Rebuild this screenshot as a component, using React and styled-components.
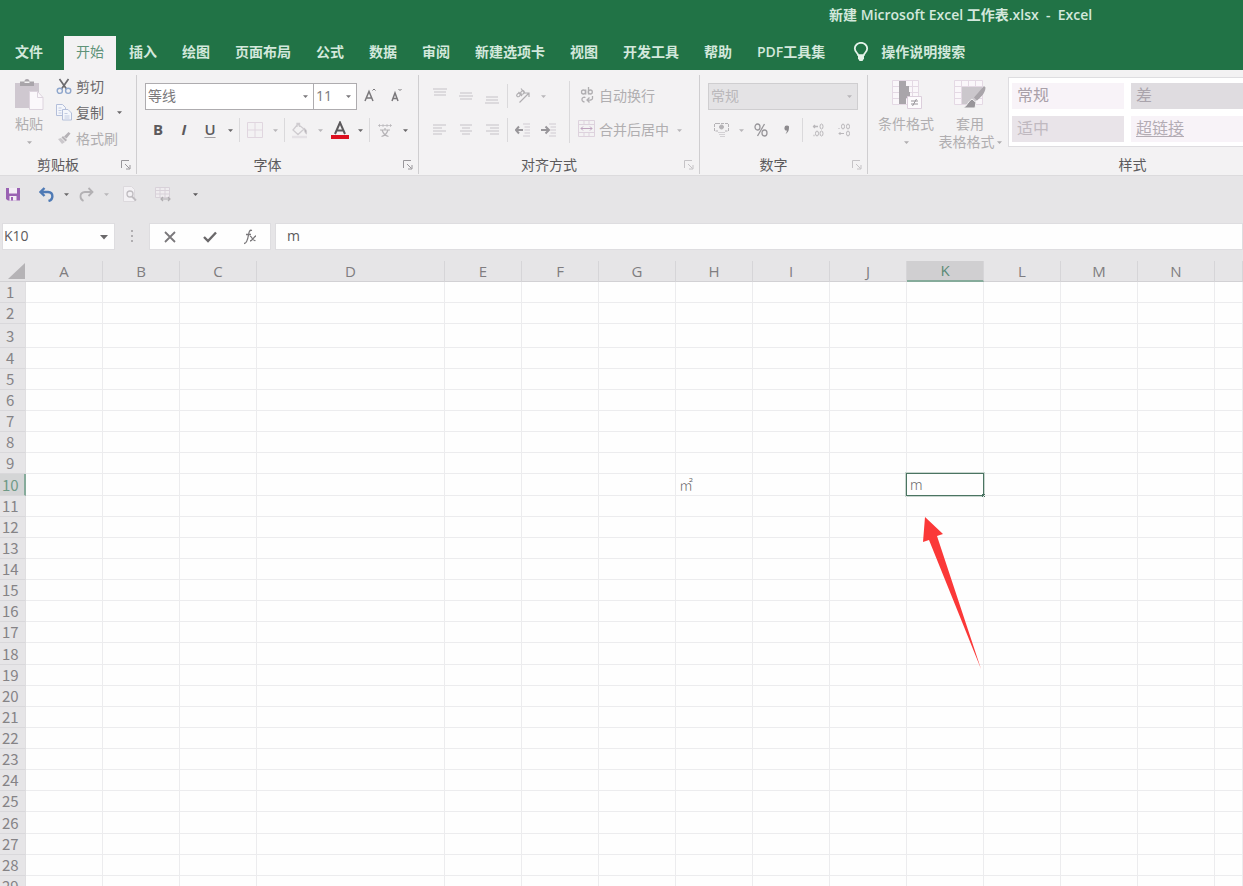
import React from "react";
import styled, { createGlobalStyle, css } from "styled-components";

const GlobalStyle = createGlobalStyle`
  * {
    box-sizing: border-box;
  }

  body {
    margin: 0;
    background: #e6e5e7;
    font-family: "Open Sans", "Noto Sans CJK SC", sans-serif;
    font-size: 14px;
    color: #5c5a5c;
  }

  button, input, select {
    font: inherit;
    color: inherit;
    border: 0;
    border-radius: 0;
    padding: 0;
    margin: 0;
    background: transparent;
  }
`
const Window = styled.div`
  display: flex;
  flex-direction: column;
  height: 100vh;
  overflow: hidden;
`
const TitleBar = styled.header`
  display: grid;
  grid-template-columns: 11fr auto 2fr;
  height: 36px;
  background: #217346;
`
const Title = styled.h1`
  grid-column: 2;
  margin: 0;
  font-size: 14px;
  font-weight: 600;
  line-height: 30px;
  white-space: pre;
  color: #d3e8dc;
`
const Tabs = styled.nav`
  display: flex;
  gap: 1px;
  flex: none;
  height: 34px;
  padding-left: 3px;
  background: #217346;
`
const Tab = styled.button`
  flex: none;
  padding: 0 12px 2px;
  margin-right: ${({file}) => file ? "8px" : "0"};
  font-weight: ${({active}) => active ? 400 : 600};
  line-height: 32px;
  white-space: nowrap;
  color: ${({active}) => active ? "#5f9379" : "#d3e8dc"};
  background: ${({active}) => active ? "#f3f2f3" : "transparent"};
`
const TellMe = styled(Tab)`
  display: flex;
  align-items: center;
  gap: 12px;
  padding: 0 15px 2px;
`
const Ribbon = styled.div`
  display: flex;
  flex: none;
  height: 106px;
  padding: 5px 0 1px;
  overflow: hidden;
  background: #f3f2f3;
  border-bottom: 1px solid #dcdbdd;
`
const Group = styled.section`
  display: flex;
  flex-direction: column;
  flex: none;
  width: ${({width}) => width};
  border-right: 1px solid #cfced0;
`
const GroupBody = styled.div`
  display: flex;
  flex: 1;
  min-height: 0;
  padding: ${({tight}) => tight ? "0" : "4px"} 8px 0;
`
const GroupFooter = styled.div`
  display: flex;
  align-items: center;
  flex: none;
  height: 18px;
`
const GroupName = styled.span`
  flex: 1;
  text-align: center;
  line-height: 18px;
`
const Launcher = styled.button`
  display: flex;
  justify-content: center;
  width: 20px;
  opacity: ${({dim}) => dim ? 0.5 : 1};
`
const Stack = styled.div`
  display: flex;
  flex-direction: column;
`
const ClipboardStack = styled(Stack)`
  width: 70px;
  margin: -2px 0 0 6px;
`
const Line = styled.div`
  display: flex;
  align-items: center;
  height: 34px;
`
const ShortLine = styled(Line)`
  justify-content: space-between;
  height: 26px;
`
const Tool = styled.button`
  display: flex;
  align-items: center;
  justify-content: center;
  flex: none;
  width: 26px;
  height: 26px;
  color: ${({dim}) => dim ? "#b9b7ba" : "#5c5a5c"};
`
const Letter = styled(Tool)`
  padding-bottom: 2px;
  font-size: 15px;
  font-weight: ${({bold}) => bold ? 700 : 600};
  font-style: ${({italic}) => italic ? "italic" : "normal"};
  text-decoration: ${({underline}) => underline ? "underline" : "none"};
  text-decoration-color: #a3a1a4;
  text-underline-offset: 2px;
`
const CaretButton = styled.button`
  display: flex;
  align-items: center;
  justify-content: center;
  flex: none;
  width: ${({wide}) => wide ? "20px" : "14px"};
  height: 26px;
  color: ${({dim}) => dim ? "#b9b7ba" : "#6a686a"};
`
const Divider = styled.span`
  flex: none;
  width: 1px;
  height: ${({tall}) => tall ? "62px" : "24px"};
  margin: ${({tall}) => tall ? "2px 7px" : "0 2px"};
  background: #dad9db;
`
const Labelled = styled.button`
  display: flex;
  align-items: center;
  gap: 4px;
  height: 26px;
  white-space: nowrap;
  color: ${({dim}) => dim ? "#b0aeb0" : "#6a686a"};
`
const WideLabelled = styled(Labelled)`
  gap: 3px;
  padding-bottom: 2px;
`
const BigTool = styled.button`
  display: flex;
  flex-direction: column;
  align-items: center;
  flex: none;
  width: ${({width}) => width};
  height: 78px;
  padding-top: 4px;
  line-height: 18px;
  white-space: nowrap;
  color: #b0aeb0;

  > svg {
    flex: none;
    margin-bottom: 4px;
  }
`
const BigToolLine = styled.span`
  display: flex;
  align-items: center;
  gap: 2px;
  height: 18px;
`
const PickerBox = styled.div`
  display: grid;
  align-items: center;
  width: ${({width}) => width};
  height: 27px;
  margin-left: ${({joined}) => joined ? "-1px" : "0"};
  background: ${({dim}) => dim ? "#e4e3e5" : "#fff"};
  border: 1px solid ${({dim}) => dim ? "#cfced0" : "#aeacaf"};
  color: ${({dim}) => dim ? "#b9b7ba" : "#7b797c"};

  > * {
    grid-area: 1 / 1;
  }

  > svg {
    justify-self: end;
    margin-right: 5px;
    pointer-events: none;
  }
`
const PickerSelect = styled.select`
  appearance: none;
  width: 100%;
  height: 25px;
  padding: 0 0 2px 2px;
  opacity: 1;
`
const Gallery = styled.div`
  display: grid;
  grid-template-columns: 112px 1fr;
  grid-template-rows: 26px 26px;
  gap: 7px;
  flex: 1;
  align-self: flex-start;
  height: 70px;
  margin: 2px 0 0 4px;
  padding: 5px 3px;
  background: #fff;
  border: 1px solid #dedde0;
`
const StyleCell = styled.button`
  padding: 0 0 2px 5px;
  font-size: 16px;
  line-height: 24px;
  text-align: left;
  text-decoration: ${({underline}) => underline ? "underline" : "none"};
  text-underline-offset: 2px;
  color: ${({color}) => color};
  background: ${({fill}) => fill};
`
const QuickAccess = styled.div`
  display: flex;
  align-items: center;
  flex: none;
  height: 36px;
  margin-bottom: 11px;
`
const QuickTool = styled(Tool)`
  width: ${({wide}) => wide ? "33px" : "26px"};
`
const SaveTool = styled(QuickTool)`
  margin-right: 7px;
`
const FormulaBar = styled.div`
  display: flex;
  flex: none;
  height: 27px;
  margin-bottom: 11px;
  padding-left: 2px;
`
const barBox = css`
  display: flex;
  align-items: center;
  background: #fefefe;
  border: 1px solid #dedde0;
`
const NameBox = styled.div`
  ${barBox}
  width: 113px;
`
const NameInput = styled.input`
  flex: 1;
  min-width: 0;
  padding: 0 0 2px 1px;
`
const Grip = styled.div`
  display: flex;
  align-items: center;
  justify-content: center;
  width: 34px;
`
const EntryButtons = styled.div`
  ${barBox}
  width: 122px;
`
const EntryButton = styled.button`
  display: flex;
  align-items: center;
  justify-content: center;
  flex: 1;
  height: 25px;
`
const FormulaInput = styled.input`
  ${barBox}
  flex: 1;
  min-width: 0;
  margin-left: 4px;
  padding: 0 0 2px 11px;
`
const SheetArea = styled.main`
  flex: 1;
  min-height: 0;
  overflow: hidden;
`
const Sheet = styled.table`
  width: 100%;
  table-layout: fixed;
  border-collapse: separate;
  border-spacing: 0;
  background: #fefefe;
`
const Corner = styled.th`
  height: 21px;
  padding: 0 1px 2px 0;
  vertical-align: bottom;
  background: #e6e5e7;
  border-bottom: 1px solid #d2d1d4;

  svg {
    display: block;
    margin-left: auto;
  }
`
const ColumnHead = styled.th`
  height: 21px;
  padding: 0;
  font-size: 15px;
  font-weight: 400;
  line-height: ${({active}) => active ? "19px" : "20px"};
  color: ${({active}) => active ? "#5b8a76" : "#7f7d80"};
  background: ${({active}) => active ? "#d0cfd1" : "#e6e5e7"};
  border-right: 1px solid #d6d5d8;
  border-bottom: ${({active}) => active ? "2px solid #86ab9b" : "1px solid #d2d1d4"};
`
const RowHead = styled.th`
  padding: 0 0 0 ${({wide}) => wide ? "2px" : "6px"};
  font-family: "Noto Sans CJK SC", sans-serif;
  font-size: 15px;
  font-weight: 400;
  line-height: 20px;
  text-align: left;
  color: ${({active}) => active ? "#6f9a87" : "#858386"};
  background: ${({active}) => active ? "#d4d5d6" : "#e6e5e7"};
  border-right: ${({active}) => active ? "2px solid #86ab9b" : "1px solid #e0dfe1"};
  border-bottom: 1px solid #d9d8db;
`
const Row = styled.tr`
  height: ${({height}) => height}px;
`
const Cell = styled.td`
  position: relative;
  padding: 0 0 0 3px;
  font-family: "Noto Sans", "Noto Sans CJK SC", sans-serif;
  font-weight: 300;
  line-height: 20px;
  color: #6a686a;
  border-right: 1px solid #ececee;
  border-bottom: 1px solid #ececee;

  ${({active}) => active && css`
    &:before {
      content: '';
      position: absolute;
      inset: -1px;
      border: 1px solid #4b7462;
      outline: 1px solid #c9d6d0;
    }

    &:after {
      content: '';
      position: absolute;
      right: -2px;
      bottom: -2px;
      width: 3px;
      height: 3px;
      background: #4b7462;
    }
  `}
`
const Pointer = styled.svg`
  position: absolute;
  z-index: 2;
  top: 43px;
  left: 14px;
`

const Caret = ({size = 5}) => (
  <svg width={size} height={size} viewBox="0 0 6 6" aria-hidden="true">
    <path d="M0 1.5h6L3 4.8z" fill="currentColor" />
  </svg>
)

const LauncherIcon = () => (
  <svg width="10" height="10" viewBox="0 0 10 10" fill="none" stroke="#98969a">
    <path d="M.5 8V.5H8M4 4l4.5 4.5M9 5v4H5" />
  </svg>
)

const BulbIcon = () => (
  <svg width="16" height="20" viewBox="0 0 16 20" fill="none" stroke="#e4f3ea" strokeWidth="1.8">
    <path d="M5.2 13.2C5 11 1.8 10 1.8 6.6a6.2 5.8 0 0 1 12.4 0c0 3.4-3.2 4.4-3.4 6.6z" />
    <path d="M5 14h6v2.5L9.5 19h-3L5 16.5z" fill="#e4f3ea" stroke="none" />
  </svg>
)

const PasteIcon = () => (
  <svg width="30" height="32" viewBox="0 0 30 32">
    <path d="M1 4h24v25H1z" fill="#cfc8d0" />
    <path d="M6 2.5h4.5a2.5 2.5 0 0 1 5 0H20V7H6z" fill="#a9a5aa" />
    <path d="M10.5 2.5h5v1.5h-5z" fill="#f3f2f3" />
    <path d="M15.5 12.5h8l5.5 6v12H15.5z" fill="#fbf8fb" stroke="#ddd4de" />
    <path d="M23.5 12.5v6H29" fill="none" stroke="#ddd4de" />
  </svg>
)

const CutIcon = () => (
  <svg width="16" height="17" viewBox="0 0 16 17" fill="none">
    <path d="M3.5 1l7 10M12.5 1l-7 10" stroke="#6b6a6e" strokeWidth="1.7" />
    <circle cx="3.8" cy="12.8" r="2.6" stroke="#8ea6cc" strokeWidth="1.4" />
    <circle cx="12.2" cy="12.8" r="2.6" stroke="#8ea6cc" strokeWidth="1.4" />
  </svg>
)

const CopyIcon = () => (
  <svg width="16" height="17" viewBox="0 0 16 17" fill="#f4f6fb" stroke="#b4bfda">
    <path d="M.5.5h6l3 3v8h-9z" />
    <path d="M6.5 5.5h5.5l3.5 3.5v7h-9z" />
    <path d="M2.5 4h3M2.5 6.5h3M2.5 9h3M8.5 9.5h3M8.5 12h5M8.5 14h5" stroke="#c3cce2" />
  </svg>
)

const BrushIcon = () => (
  <svg width="16" height="16" viewBox="0 0 16 16" fill="#b5b2b6">
    <path d="M12.5 2l2 1.5-4 5-2.5-2zM7 6l4 4-1.5 1.5-4-4z" />
    <path d="M5 8l4 4-3 2-4-5z" fill="#cbc8cc" />
  </svg>
)

const GrowIcon = ({shrink}) => (
  <svg width="16" height="18" viewBox="0 0 16 18" fill="none" stroke="#7a787b">
    <path d={shrink ? "M4 14l3-8 3 8M5 11.5h4" : "M3 14L7 4.5 11 14M4.5 11h5"} strokeWidth="1.5" />
    <path d={shrink ? "M10.5 2l1.5 1.5L13.5 2" : "M10.5 3.5L12 2l1.5 1.5"} />
  </svg>
)

const BordersIcon = () => (
  <svg width="16" height="16" viewBox="0 0 16 16" fill="none" stroke="#e0d6df">
    <path d="M.5.5h15v15H.5zM8 .5v15M.5 8h15" />
  </svg>
)

const FillIcon = () => (
  <svg width="18" height="17" viewBox="0 0 18 17" fill="none" stroke="#cfccd0">
    <path d="M7 2L2 8l5 4.5L13 7 8 3zM6 5V1.5h2.5V5" strokeWidth="1.3" />
    <path d="M13 6c2 1 3 3 2.5 6-1-.5-2-2-2.5-6z" fill="#b5b2b6" />
    <path d="M1 15h15" stroke="#e4e1e5" strokeWidth="2.5" />
  </svg>
)

const FontColorIcon = () => (
  <svg width="18" height="19" viewBox="0 0 18 19" fill="none">
    <path d="M4 13L9 1.5 14 13M5.5 9.5h7" stroke="#5c5a5c" strokeWidth="2" />
    <path d="M0 14h18v4H0z" fill="#dd1020" />
  </svg>
)

const PhoneticIcon = () => (
  <svg width="16" height="16" viewBox="0 0 16 16" fill="none" stroke="#b5b3b6">
    <path d="M1 3.5h14M2.5 2v3M6 2v3M10 2v3M13.5 2v3" opacity="0.7" />
    <path d="M3 8h10M8 6v2M5 8c1 3 3 5.5 6.5 6.5M11 8c-1 3-3 5.5-6.5 6.5" strokeWidth="1.2" />
  </svg>
)

// horizontal rules of a paragraph icon, given as [x, width] from the top
const LinesIcon = ({rows, top = 2}) => (
  <svg width="14" height="16" viewBox="0 0 14 16" fill="#dcdadd">
    {rows.map(([x, width], i) => (
      <rect key={i} x={x} y={top + i * 3} width={width} height="2" />
    ))}
  </svg>
)

const OrientIcon = () => (
  <svg width="16" height="16" viewBox="0 0 16 16" fill="none" stroke="#b0aeb1" strokeWidth="1.2">
    <path d="M4.5 14.5l9-9M10 5h4v4" />
    <ellipse cx="3.5" cy="7" rx="2" ry="1.5" transform="rotate(-45 3.5 7)" />
    <ellipse cx="7.5" cy="4.5" rx="2" ry="1.5" transform="rotate(-45 7.5 4.5)" />
    <path d="M3.5 4l3.5 4M6 .5l4 5" />
  </svg>
)

const IndentIcon = ({right}) => (
  <svg width="16" height="14" viewBox="0 0 16 14" fill="none">
    <path d="M8 1h7M9.5 4h5.5M9.5 7h5.5M9.5 10h5.5M8 13h7" stroke="#dcd8dd" strokeWidth="1.4" />
    <path d={right ? "M0 7h7M4.5 3.5L8 7l-3.5 3.5" : "M8 7H1M4 3.5L.8 7 4 10.5"} stroke="#98969a" strokeWidth="2" />
  </svg>
)

const WrapIcon = () => (
  <svg width="19" height="17" viewBox="0 0 19 17" fill="none" stroke="#b0aeb1" strokeWidth="1.3">
    <circle cx="6.5" cy="5" r="2" />
    <path d="M8.7 2.5V7.5M11.5 0v7.5" />
    <circle cx="13.3" cy="5" r="2" />
    <path d="M8.5 10.5c-4-1.5-5 4-1 4.5M15.5 9v2.5c0 1.5-3 2-5 1.5M12.5 10.5L10 13l2.5 2.5" />
  </svg>
)

const MergeIcon = () => (
  <svg width="19" height="18" viewBox="0 0 19 18" fill="none" stroke="#ddd2dd">
    <path d="M1.5.5h16v16h-16zM1.5 4.5h16M1.5 12.5h16M7 .5v4M12 .5v4M7 12.5v4M12 12.5v4" />
    <path d="M4 8.5h11M6 6.5l-2 2 2 2M13 6.5l2 2-2 2" stroke="#bfa4bf" />
  </svg>
)

const CurrencyIcon = () => (
  <svg width="17" height="16" viewBox="0 0 17 16" fill="none" stroke="#b5b3b6">
    <path d="M5 1.5H1.5V9H5M12 1.5h3.5V9H12M4 1.5h9" strokeDasharray="3 1" />
    <circle cx="8.5" cy="5" r="2" fill="#b5b3b6" />
    <path d="M5 10.5h7M6 12.5h6M7 14.5h5" stroke="#d3d1d4" />
  </svg>
)

const PercentIcon = () => (
  <svg width="14" height="14" viewBox="0 0 14 14" fill="none" stroke="#98969a" strokeWidth="1.3">
    <ellipse cx="3.5" cy="4" rx="2.5" ry="3" />
    <ellipse cx="10.5" cy="10" rx="2.5" ry="3" />
    <path d="M10.5 1l-7 12" />
  </svg>
)

const CommaIcon = () => (
  <svg width="8" height="12" viewBox="0 0 8 12">
    <path d="M4 1.5a2 2 0 0 1 2 2.3C6 7 4.5 9 2.5 10c1-1.5 1.5-2.5 1.3-3.5A2.5 2.5 0 0 1 4 1.5z" fill="#8d8b8e" />
  </svg>
)

const DecimalIcon = ({less}) => (
  <svg width="14" height="14" viewBox="0 0 14 14" fill="none" stroke="#b9b7ba">
    {less ? (
      <>
        <path d="M1.5 5.5h1M2 10.5h5M3.5 9L2 10.5 3.5 12" />
        <ellipse cx="6" cy="3.5" rx="1.5" ry="2.5" />
        <ellipse cx="11" cy="3.5" rx="1.5" ry="2.5" />
        <ellipse cx="11" cy="10.5" rx="1.5" ry="2.5" />
      </>
    ) : (
      <>
        <path d="M2 3.5h5M4 2L2.5 3.5 4 5M2.5 12.5h1" strokeWidth="1.3" />
        <ellipse cx="10.5" cy="3.5" rx="1.5" ry="2.5" />
        <ellipse cx="6" cy="10.5" rx="1.5" ry="2.5" />
        <ellipse cx="10.5" cy="10.5" rx="1.5" ry="2.5" />
      </>
    )}
  </svg>
)

const ConditionalIcon = () => (
  <svg width="32" height="32" viewBox="0 0 32 32" fill="none">
    <path d="M2.5 1.5h26v24h-26zM2.5 7.5h26M2.5 13.5h26M2.5 19.5h26M22.5 1.5v24" fill="#faf7fa" stroke="#e4d9e4" />
    <path d="M9 2h7v5h3v6h1v6h-4v6H9z" fill="#a9a5aa" />
    <path d="M17.5 17.5h14v12h-14z" fill="#fdfbfd" stroke="#dccfdc" />
    <path d="M21 22h7M21 25h7M26.5 20l-4 7" stroke="#98959a" />
  </svg>
)

const FormatTableIcon = () => (
  <svg width="34" height="32" viewBox="0 0 34 32" fill="none">
    <path d="M1.5 1.5h28v24h-28zM1.5 7.5h28M1.5 13.5h28M1.5 19.5h28M8.5 1.5v24M15.5 1.5v6M22.5 1.5v6" fill="#faf7fa" stroke="#e4d9e4" />
    <path d="M9 8h20v8l-9 9H9z" fill="#cbc7cc" />
    <path d="M31 7l1.5 1.5c0 5-4 9-8.5 13l-3-3z" fill="#a9a5aa" />
    <path d="M19 20l4 3.5L22 29H10c4-1.5 5-7 9-9z" fill="#98959a" stroke="#f3f2f3" />
  </svg>
)

const SaveIcon = () => (
  <svg width="14" height="14" viewBox="0 0 14 14">
    <path d="M0 1h14v12.5H2L0 12z" fill="#9a62b3" />
    <path d="M3 1h8v5.5H3zM3.5 9h7v4.5h-7z" fill="#f3edf5" />
    <path d="M5 10h2v3.5H5z" fill="#9a62b3" />
  </svg>
)

const UndoIcon = ({redo}) => (
  <svg width="15" height="15" viewBox="0 0 15 15" fill="none" stroke={redo ? "#b3b1b4" : "#4f7ab5"}>
    <path
      d={redo ? "M13.5 5H6C0 5.5.5 12 4.5 14M9.5 1l4 4-4 4" : "M1.5 5H9c6 .5 5.5 7.5.5 9M5.5 1l-4 4 4 4"}
      strokeWidth={redo ? 1.8 : 2.4}
    />
  </svg>
)

const PreviewIcon = () => (
  <svg width="15" height="16" viewBox="0 0 15 16" fill="none">
    <path d="M1.5.5h8l3 3v12h-11z" fill="#f3f1f4" stroke="#dcd9dd" />
    <circle cx="8" cy="8" r="3" stroke="#bfbcc0" strokeWidth="1.3" />
    <path d="M10 10.5l4 4" stroke="#bfbcc0" strokeWidth="1.8" />
  </svg>
)

const TableEditIcon = () => (
  <svg width="17" height="16" viewBox="0 0 17 16" fill="none">
    <path d="M1.5 1.5h14v10h-14zM1.5 4.5h14M1.5 8h14M6 1.5v10M11 1.5v10" fill="#efecef" stroke="#d8d1d9" />
    <path d="M7 13h9M9 11l-2 2 2 2M14 11l2 2-2 2" stroke="#b0adb1" strokeWidth="1.2" />
  </svg>
)

const Picker = ({label, value, width, joined, dim}) => (
  <PickerBox width={width} joined={joined} dim={dim}>
    <PickerSelect aria-label={label} defaultValue={value} disabled={dim}>
      <option>{value}</option>
    </PickerSelect>
    <Caret />
  </PickerBox>
)

const RibbonGroup = ({name, width, tight, dim, children}) => (
  <Group width={width} aria-label={name}>
    <GroupBody tight={tight}>{children}</GroupBody>
    <GroupFooter>
      <GroupName>{name}</GroupName>
      <Launcher dim={dim} aria-label={name + "设置"}><LauncherIcon /></Launcher>
    </GroupFooter>
  </Group>
)

const More = ({dim, wide}) => (
  <CaretButton dim={dim} wide={wide} aria-label="更多"><Caret /></CaretButton>
)

const tabs = ["文件", "开始", "插入", "绘图", "页面布局", "公式", "数据", "审阅", "新建选项卡", "视图", "开发工具", "帮助", "PDF工具集"];

const columns = [
  ["A", 77], ["B", 77], ["C", 77], ["D", 188], ["E", 77], ["F", 77], ["G", 77], ["H", 77],
  ["I", 77], ["J", 77], ["K", 77], ["L", 77], ["M", 77], ["N", 77], ["", "auto"],
];

const rowHeights = {3: 24, 10: 22, 18: 22, 26: 22};
const rows = Array.from({length: 29}, (_, i) => i + 1);
const cells = {H10: "㎡", K10: "m"};

const Spreadsheet = () => (
  <SheetArea>
    <Sheet>
      <colgroup>
        <col width="26" />
        {columns.map(([name, width]) => <col key={name} width={width} />)}
      </colgroup>
      <thead>
        <tr>
          <Corner aria-label="全选">
            <svg width="17" height="16" viewBox="0 0 17 16"><path d="M17 0v16H0z" fill="#b5b3b6" /></svg>
          </Corner>
          {columns.map(([name]) => (
            <ColumnHead key={name} active={name === "K"}>{name}</ColumnHead>
          ))}
        </tr>
      </thead>
      <tbody>
        {rows.map(row => (
          <Row key={row} height={rowHeights[row] || 21}>
            <RowHead active={row === 10} wide={row > 9}>{row}</RowHead>
            {columns.map(([name]) => {
              const active = name + row === "K10";
              return (
                <Cell key={name} active={active}>
                  {cells[name + row]}
                  {active && (
                    <Pointer width="62" height="154" viewBox="0 0 62 154" aria-hidden="true">
                      <path d="M4 0l18 17-6 2 44 133L8 23l-6 2z" fill="#fb3838" />
                    </Pointer>
                  )}
                </Cell>
              )
            })}
          </Row>
        ))}
      </tbody>
    </Sheet>
  </SheetArea>
)

const App = () => {
  return (
    <Window>
      <GlobalStyle />

      <TitleBar>
        <Title>{"新建 Microsoft Excel 工作表.xlsx  -  Excel"}</Title>
      </TitleBar>

      <Tabs>
        {tabs.map((tab, i) => (
          <Tab key={tab} file={i === 0} active={i === 1}>{tab}</Tab>
        ))}
        <TellMe><BulbIcon />操作说明搜索</TellMe>
      </Tabs>

      <Ribbon>
        <RibbonGroup name="剪贴板" width="137px" tight>
          <BigTool width="42px">
            <PasteIcon />
            粘贴
            <BigToolLine><Caret /></BigToolLine>
          </BigTool>
          <ClipboardStack>
            <ShortLine><Labelled><CutIcon />剪切</Labelled></ShortLine>
            <ShortLine>
              <Labelled><CopyIcon />复制</Labelled>
              <More />
            </ShortLine>
            <ShortLine><Labelled dim><BrushIcon />格式刷</Labelled></ShortLine>
          </ClipboardStack>
        </RibbonGroup>

        <RibbonGroup name="字体" width="282px">
          <Stack>
            <Line>
              <Picker label="字体" value="等线" width="169px" />
              <Picker label="字号" value="11" width="44px" joined />
              <Tool aria-label="增大字号"><GrowIcon /></Tool>
              <Tool aria-label="减小字号"><GrowIcon shrink /></Tool>
            </Line>
            <Line>
              <Letter bold>B</Letter>
              <Letter bold italic>I</Letter>
              <Letter underline>U</Letter>
              <More />
              <Divider />
              <Tool aria-label="边框"><BordersIcon /></Tool>
              <More dim />
              <Divider />
              <Tool aria-label="填充颜色"><FillIcon /></Tool>
              <More dim />
              <Tool aria-label="字体颜色"><FontColorIcon /></Tool>
              <More />
              <Divider />
              <Tool aria-label="拼音"><PhoneticIcon /></Tool>
              <More />
            </Line>
          </Stack>
        </RibbonGroup>

        <RibbonGroup name="对齐方式" width="281px" dim>
          <Stack>
            <Line>
              <Tool aria-label="顶端对齐"><LinesIcon rows={[[0, 14], [1, 12], [1, 12]]} top={0} /></Tool>
              <Tool aria-label="垂直居中"><LinesIcon rows={[[1, 12], [0, 14], [1, 12]]} top={4} /></Tool>
              <Tool aria-label="底端对齐"><LinesIcon rows={[[1, 12], [1, 12], [0, 14]]} top={8} /></Tool>
              <Divider />
              <Tool aria-label="方向"><OrientIcon /></Tool>
              <More dim />
            </Line>
            <Line>
              <Tool aria-label="左对齐"><LinesIcon rows={[[0, 13], [0, 9], [0, 13], [0, 9]]} /></Tool>
              <Tool aria-label="居中"><LinesIcon rows={[[1, 12], [3, 8], [1, 12], [3, 8]]} /></Tool>
              <Tool aria-label="右对齐"><LinesIcon rows={[[1, 13], [5, 9], [1, 13], [5, 9]]} /></Tool>
              <Divider />
              <Tool aria-label="减少缩进"><IndentIcon /></Tool>
              <Tool aria-label="增加缩进"><IndentIcon right /></Tool>
            </Line>
          </Stack>
          <Divider tall />
          <Stack>
            <Line><WideLabelled dim><WrapIcon />自动换行</WideLabelled></Line>
            <Line>
              <WideLabelled dim><MergeIcon />合并后居中</WideLabelled>
              <More dim wide />
            </Line>
          </Stack>
        </RibbonGroup>

        <RibbonGroup name="数字" width="168px" dim>
          <Stack>
            <Line><Picker label="数字格式" value="常规" width="150px" dim /></Line>
            <Line>
              <Tool aria-label="会计数字格式"><CurrencyIcon /></Tool>
              <More dim />
              <Tool aria-label="百分比样式"><PercentIcon /></Tool>
              <Tool aria-label="千位分隔样式"><CommaIcon /></Tool>
              <Divider />
              <Tool aria-label="增加小数位数"><DecimalIcon /></Tool>
              <Tool aria-label="减少小数位数"><DecimalIcon less /></Tool>
            </Line>
          </Stack>
        </RibbonGroup>

        <RibbonGroup name="样式" width="550px" tight>
          <BigTool width="60px">
            <ConditionalIcon />
            条件格式
            <BigToolLine><Caret /></BigToolLine>
          </BigTool>
          <BigTool width="68px">
            <FormatTableIcon />
            套用
            <BigToolLine>表格格式<Caret /></BigToolLine>
          </BigTool>
          <Gallery>
            <StyleCell color="#a9a0a9" fill="#f8f3f8">常规</StyleCell>
            <StyleCell color="#aaa4ac" fill="#dfdce0">差</StyleCell>
            <StyleCell color="#c0b9c0" fill="#e9e4e9">适中</StyleCell>
            <StyleCell color="#b3acb4" fill="#f8f3f8" underline>超链接</StyleCell>
          </Gallery>
        </RibbonGroup>
      </Ribbon>

      <QuickAccess>
        <SaveTool aria-label="保存"><SaveIcon /></SaveTool>
        <QuickTool aria-label="撤消"><UndoIcon /></QuickTool>
        <More />
        <QuickTool aria-label="恢复"><UndoIcon redo /></QuickTool>
        <More dim />
        <QuickTool wide aria-label="打印预览"><PreviewIcon /></QuickTool>
        <QuickTool wide aria-label="编辑表格"><TableEditIcon /></QuickTool>
        <QuickTool wide aria-label="自定义快速访问工具栏"><Caret /></QuickTool>
      </QuickAccess>

      <FormulaBar>
        <NameBox>
          <NameInput aria-label="名称框" defaultValue="K10" />
          <CaretButton wide aria-label="名称列表"><Caret size={8} /></CaretButton>
        </NameBox>
        <Grip>
          <svg width="3" height="13" viewBox="0 0 3 13" fill="#b0aeb1">
            <path d="M0 0h2v2H0zM0 5h2v2H0zM0 10h2v2H0z" />
          </svg>
        </Grip>
        <EntryButtons>
          <EntryButton aria-label="取消">
            <svg width="12" height="12" viewBox="0 0 12 12" fill="none" stroke="#7a787b" strokeWidth="1.8">
              <path d="M1 1l10 10M11 1L1 11" />
            </svg>
          </EntryButton>
          <EntryButton aria-label="输入">
            <svg width="14" height="12" viewBox="0 0 14 12" fill="none" stroke="#6a686a" strokeWidth="2.4">
              <path d="M1 6l4 4 8-8.5" />
            </svg>
          </EntryButton>
          <EntryButton aria-label="插入函数">
            <svg width="14" height="16" viewBox="0 0 14 16" fill="none" stroke="#7a787b" strokeWidth="1.3">
              <path d="M9 1.5C6.5.5 6 3 5.5 6S4 14.5 1 14.5M3 5.5h5" />
              <path d="M7 7.5c2-1 2 5 5.5 4M13 7c-2 0-3.5 5-6 5" />
            </svg>
          </EntryButton>
        </EntryButtons>
        <FormulaInput aria-label="编辑栏" defaultValue="m" />
      </FormulaBar>

      <Spreadsheet />
    </Window>
  );
}

export default App;
